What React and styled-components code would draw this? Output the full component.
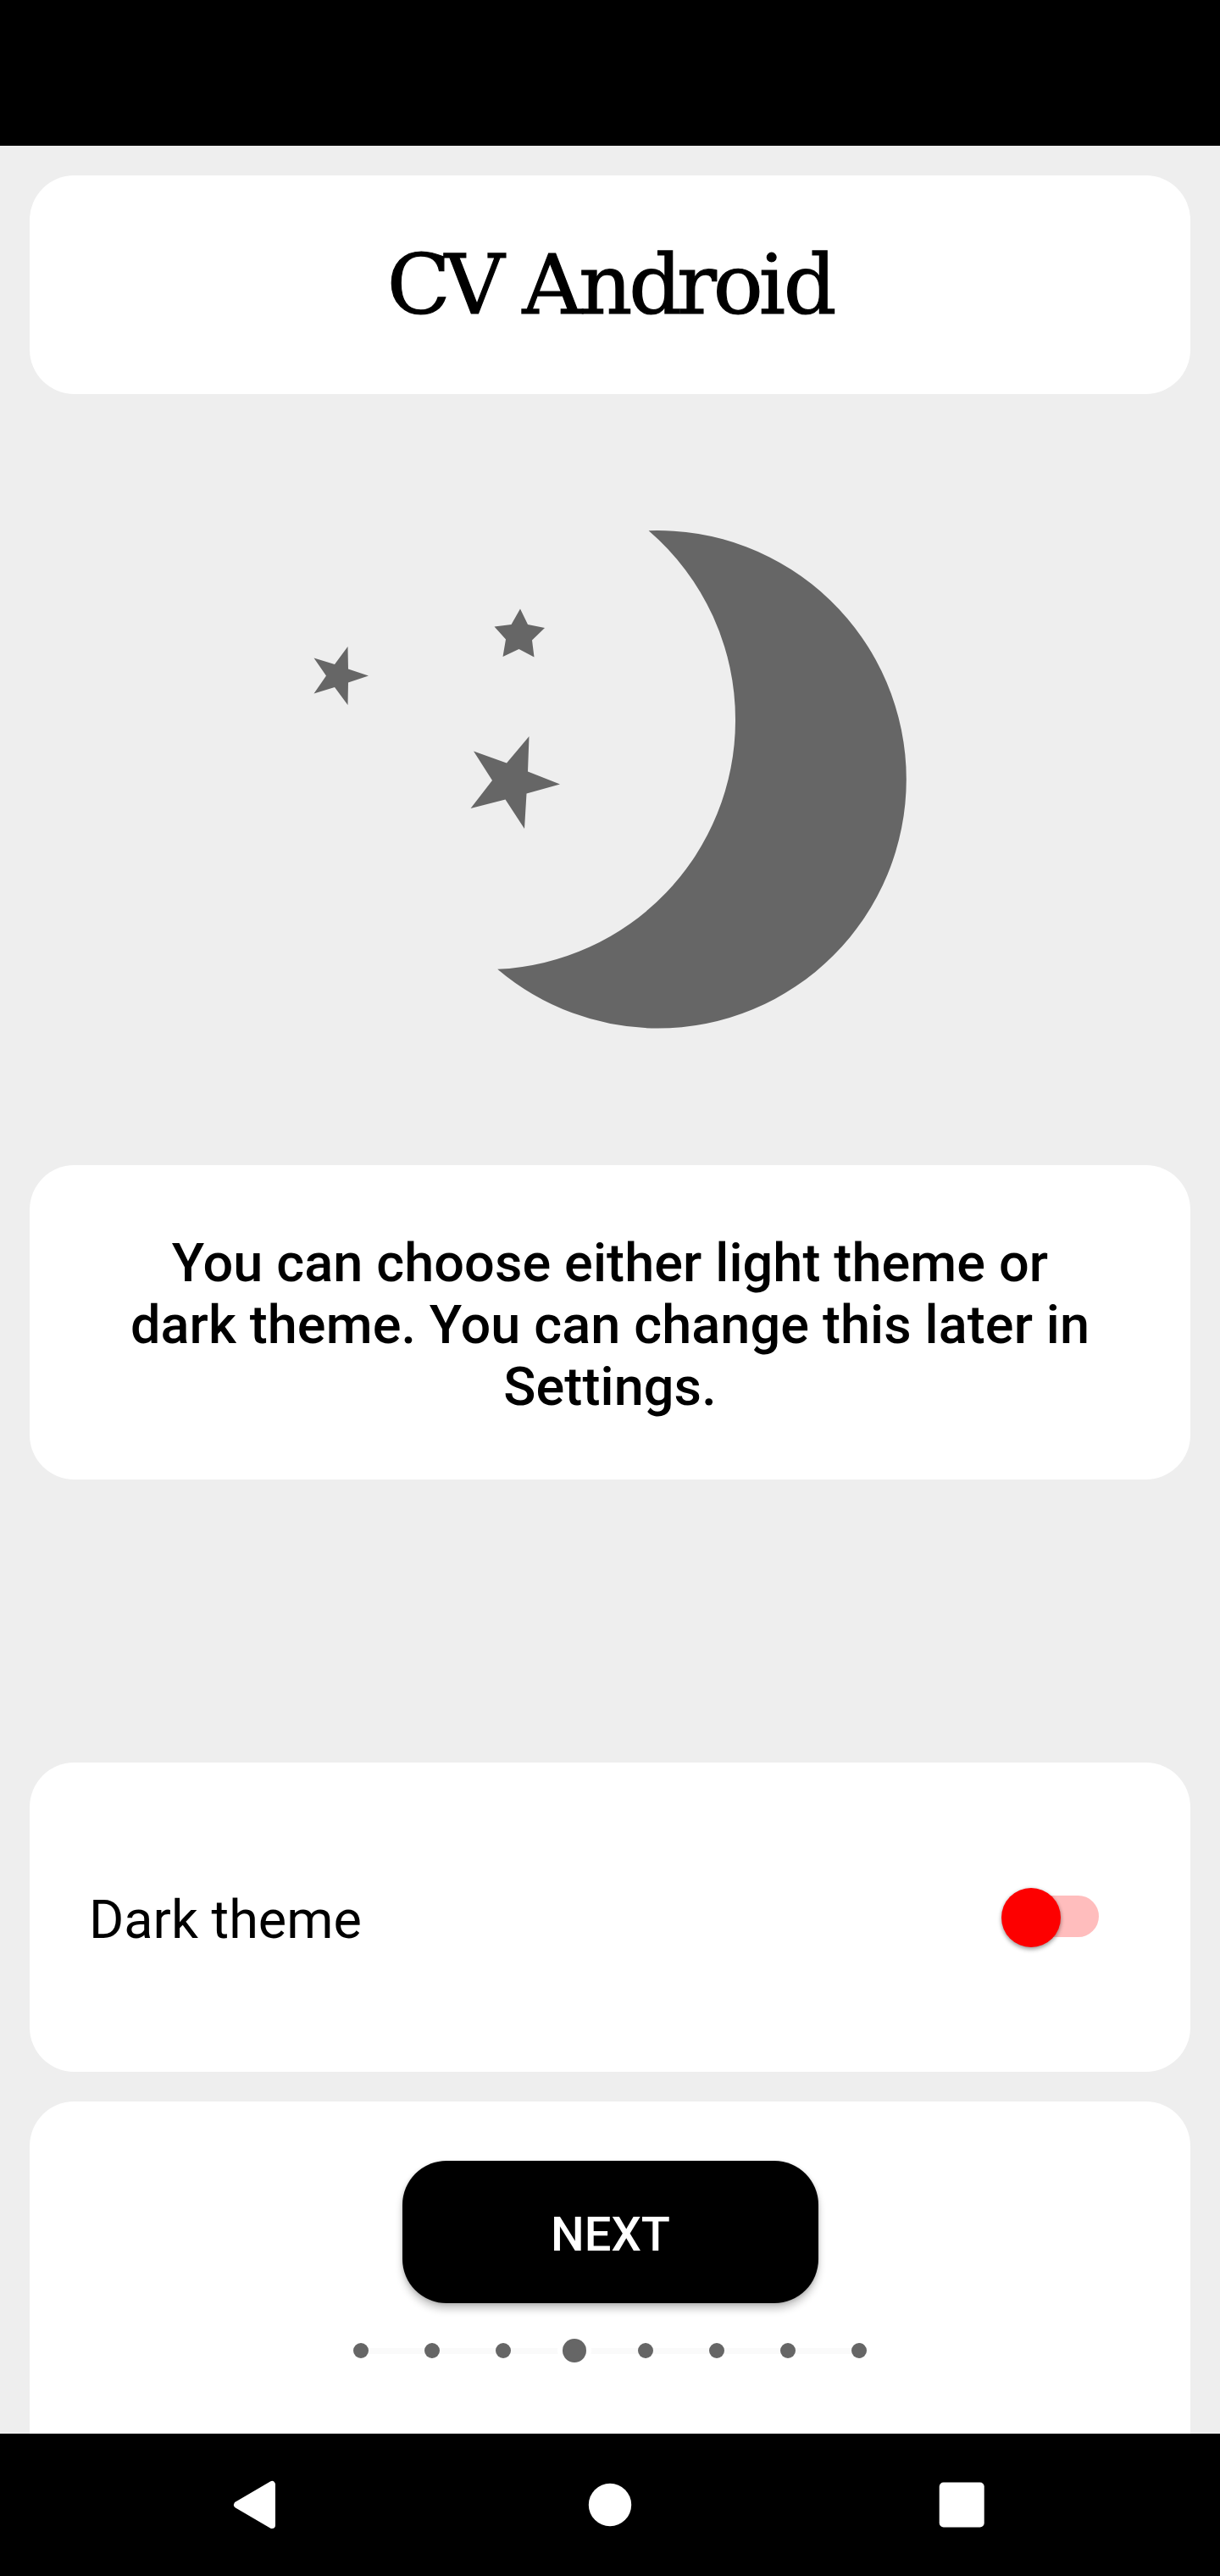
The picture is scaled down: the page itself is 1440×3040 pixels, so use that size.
import React, { useState } from "react";
import styled, { createGlobalStyle } from "styled-components";

const Global = createGlobalStyle`
  * { box-sizing: border-box; }
  body { margin: 0; background: #eeeeee; }
`;

const Screen = styled.div`
  width: 1440px;
  height: 3040px;
  display: flex;
  flex-direction: column;
  background: #eeeeee;
  color: #000;
  font-family: Roboto, "Liberation Sans", sans-serif;
  overflow: hidden;
`;

const StatusBar = styled.div`
  height: 172px;
  flex: none;
  background: #000;
`;

const Page = styled.main`
  flex: none;
  height: 2700px;
  padding: 35px 35px 0;
  display: flex;
  flex-direction: column;
`;

const Card = styled.section`
  flex: none;
  height: ${(p) => p.$height}px;
  background: #fff;
  border-radius: ${(p) => (p.$open ? "52.5px 52.5px 0 0" : "52.5px")};
`;

const TitleCard = styled(Card)`
  display: flex;
  justify-content: center;
  padding: 59px 0 0 4px;
`;

const Title = styled.h1`
  margin: 0;
  font: 400 98px/140px "DejaVu Serif", "Liberation Serif", serif;
  -webkit-text-stroke: 1.2px #000;
  white-space: nowrap;
`;

const Kern = styled.span`
  letter-spacing: ${(p) => p.$by}px;
`;

const Art = styled.div`
  flex: none;
  height: 910px;
  display: flex;
  justify-content: center;
  padding-top: 135px;

  svg { flex: none; width: 760px; height: 640px; }
`;

const MessageCard = styled(Card)`
  padding: 79px 105px 0;
`;

const Message = styled.p`
  margin: 0;
  font-size: 63px;
  font-weight: 500;
  line-height: 73px;
  letter-spacing: 0.1px;
  text-align: center;
`;

const SettingCard = styled(Card)`
  margin-top: 334px;
  display: flex;
  align-items: center;
  justify-content: space-between;
  padding: 0 108px 0 70px;
`;

const Label = styled.span`
  padding-top: 7px;
  font-size: 63px;
  line-height: 74px;
`;

const Toggle = styled.button`
  width: 115px;
  height: 72px;
  padding: 0;
  border: 0;
  background: none;
  display: flex;
  align-items: center;
`;

const Track = styled.span`
  width: 97px;
  height: 49px;
  margin: -2px 0 0 18px;
  border-radius: 25px;
  background: #ffbdbd;
  display: flex;
  align-items: center;
`;

const Thumb = styled.span`
  flex: none;
  width: 70px;
  height: 70px;
  margin: 2px 0 0 -18px;
  border-radius: 50%;
  background: #fd0000;
  box-shadow: 0 3px 5px rgba(0, 0, 0, 0.32), 0 0 4px rgba(0, 0, 0, 0.14);
`;

const FooterCard = styled(Card)`
  margin-top: 35px;
  padding-top: 70px;
  display: flex;
  flex-direction: column;
  align-items: center;
`;

const NextButton = styled.button`
  width: 491px;
  height: 168px;
  padding: 6px 0 0 1px;
  border: 0;
  border-radius: 52px;
  background: #000;
  color: #fff;
  font: 500 56px/66px Roboto, "Liberation Sans", sans-serif;
  box-shadow: 0 7px 10px rgba(0, 0, 0, 0.22), 0 1px 4px rgba(0, 0, 0, 0.16);
`;

const Steps = styled.div`
  margin-top: 42px;
  width: 606px;
  height: 28px;
  display: flex;
  align-items: center;
`;

const Dot = styled.i`
  flex: none;
  z-index: 1;
  width: ${(p) => (p.$active ? 28 : 18)}px;
  height: ${(p) => (p.$active ? 28 : 18)}px;
  border-radius: 50%;
  background: #666;
  margin: ${(p) => (p.$active ? "0 -5px" : "0")};
  box-shadow: ${(p) => (p.$active ? "0 0 0 6px #fff" : "none")};
`;

const Line = styled.i`
  flex: 1;
  height: 7px;
  background: #fafafa;
`;

const NavBar = styled.nav`
  flex: none;
  height: 168px;
  background: #000;
  display: flex;
  align-items: center;
  justify-content: space-between;
  padding: 0 278px 0 273px;
`;

const steps = [0, 1, 2, 3, 4, 5, 6, 7];

const title = [
  ["C", -7],
  ["V ", -5],
  ["A", -4],
  ["n", -4.3],
  ["d", -6],
  ["r", -4],
  ["o", -5],
  ["i", -2.5],
  ["d", 0],
];

export default function App() {
  const [active] = useState(3);
  return (
    <Screen>
      <Global />
      <StatusBar />
      <Page>
        <TitleCard $height={258}>
          <Title>
            {title.map(([letter, by], i) => (
              <Kern key={i} $by={by}>{letter}</Kern>
            ))}
          </Title>
        </TitleCard>
        <Art>
          <svg viewBox="340 600 760 640" fill="#666">
            <path d="M765.600 626.200 A293.900 293.800 0 0 1 1069.800 919.800 A293.900 293.800 0 0 1 775.900 1213.600 A293.900 293.800 0 0 1 587.200 1143.800 A294.300 294 0 0 0 868 851 A294.300 294 0 0 0 765.600 626.200 Z" />
            <path d="M614 718.500l9 18.500 20 4-15 14.500 2.500 20-18-9.500-19 9 3.500-20.500-13.500-15 20-2.500z" />
            <path d="M410.500 763l.5 26.500 24 8-24 8-.5 26.500-15.500-21-24.500 7.500 14.500-21-14.500-21 24.500 7.500z" />
            <path d="M624.500 869l-1.500 41.500 38 15-39.500 11-2.500 41.500-22.500-34.500-41 10.500 25.500-33-22-34.500 39 14z" />
          </svg>
        </Art>
        <MessageCard $height={371}>
          <Message>
            You can choose either light theme or dark theme. You can change this later in Settings.
          </Message>
        </MessageCard>
        <SettingCard $height={365}>
          <Label>Dark theme</Label>
          <Toggle aria-label="Dark theme">
            <Track><Thumb /></Track>
          </Toggle>
        </SettingCard>
        <FooterCard $height={392} $open>
          <NextButton>NEXT</NextButton>
          <Steps>
            {steps.map((s) => (
              <React.Fragment key={s}>
                {s > 0 && <Line />}
                <Dot $active={s === active} />
              </React.Fragment>
            ))}
          </Steps>
        </FooterCard>
      </Page>
      <NavBar>
        <svg width="59" height="60" viewBox="0 0 59 60" fill="#fff" stroke="#fff" strokeWidth="8" strokeLinejoin="round">
          <path d="M48 6 V54 L7 30 Z" />
        </svg>
        <svg width="52" height="52" viewBox="0 0 52 52" fill="#fff"><circle cx="26" cy="26" r="25.200" /></svg>
        <svg width="54" height="54" viewBox="0 0 54 54" fill="#fff"><rect x="0.700" y="0.500" width="53" height="53" rx="5" /></svg>
      </NavBar>
    </Screen>
  );
}
